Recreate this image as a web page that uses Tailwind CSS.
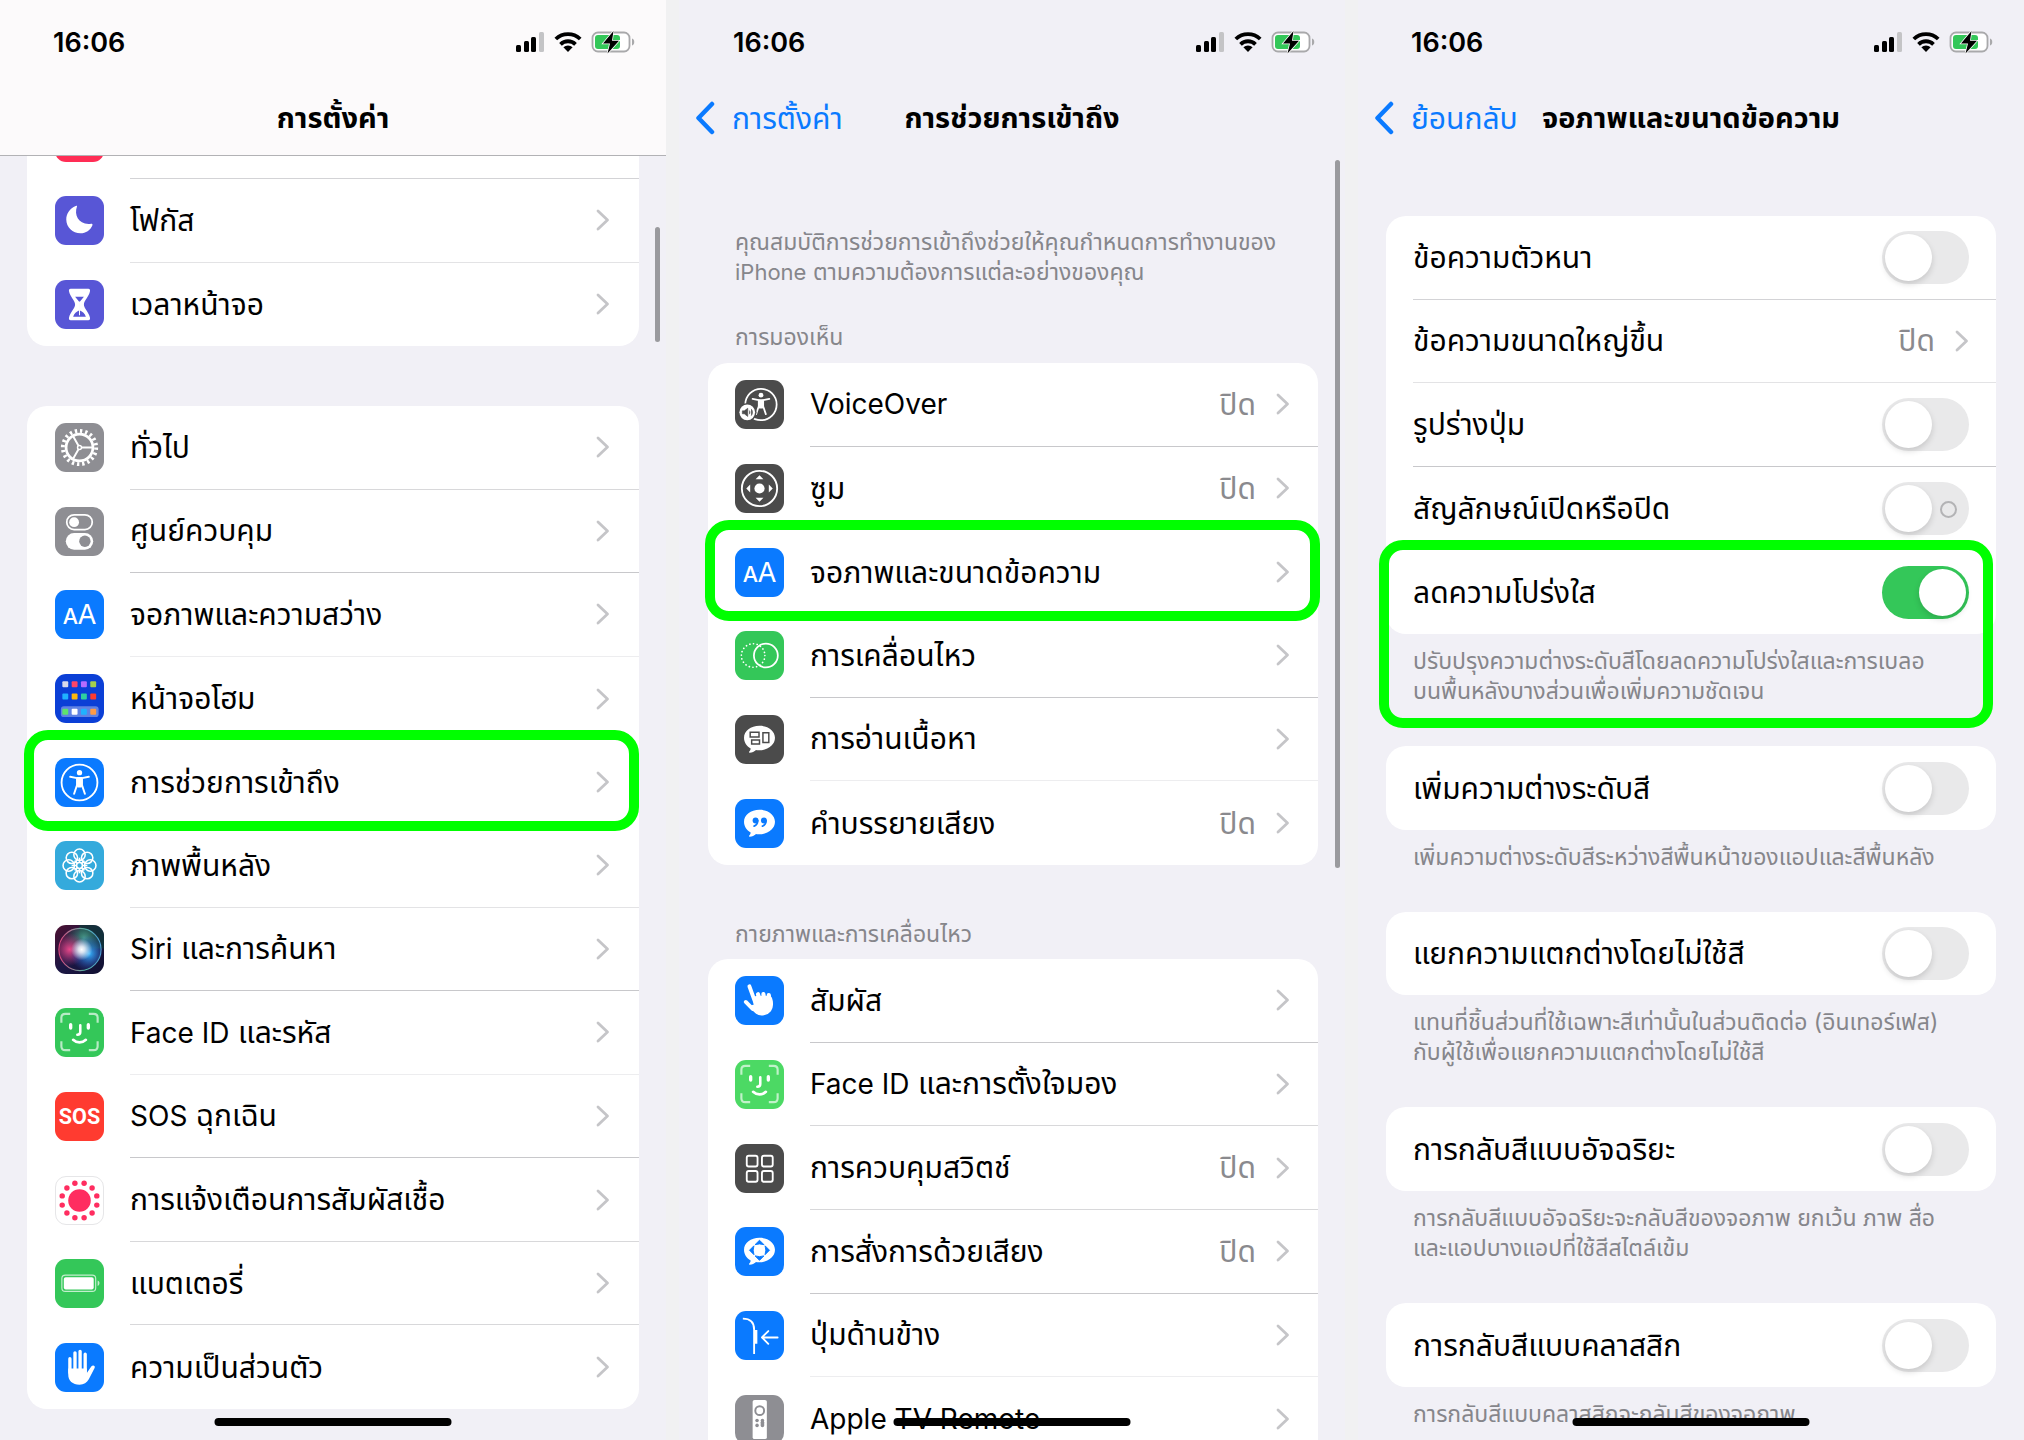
<!DOCTYPE html>
<html lang="th">
<head>
  <meta charset="UTF-8" />
  <meta name="viewport" content="width=device-width, initial-scale=1.0" />
  <title>การตั้งค่า</title>
  <script src="https://cdn.jsdelivr.net/npm/@tailwindcss/browser@4"></script>
</head>
<body class="h-screen overflow-hidden bg-[#f1f1f2] font-['Inter','Noto_Sans_Thai','Noto_Sans',sans-serif] text-black">

  <!-- Shared symbols -->
  <svg class="hidden" xmlns="http://www.w3.org/2000/svg">
    <symbol id="status" viewBox="0 0 120 24">
      <g fill="#000">
        <rect x="1" y="14" width="5" height="7" rx="1.5" />
        <rect x="9" y="10" width="5" height="11" rx="1.5" />
        <rect x="16" y="6" width="5" height="15" rx="1.5" />
        <rect x="24" y="1" width="5" height="20" rx="1.5" fill="#c4c4c6" />
        <path d="M53 21l-4.600-4.700a6.600 6.600 0 0 1 9.200 0z" />
      </g>
      <g fill="none" stroke="#000" stroke-width="3.800">
        <path d="M40.800 8a17.500 17.500 0 0 1 24.400 0" />
        <path d="M45.500 13.300a10.800 10.800 0 0 1 15 0" />
      </g>
      <rect x="77.500" y="1.500" width="37" height="19" rx="5.500" fill="#fff" stroke="#a9a9ab" stroke-width="1.800" />
      <rect x="80" y="4" width="25" height="14" rx="3" fill="#34c759" />
      <path d="M117 7.500c3 .8 3 6.200 0 7z" fill="#a9a9ab" />
      <path d="M98.500 0L88 12.500h7L92.500 22.500 104 9.800h-7z" fill="#000" stroke="#fff" stroke-width="1.500" paint-order="stroke" />
    </symbol>
    <symbol id="chevron" viewBox="0 0 14 22">
      <path d="M2 2l9.500 9L2 20" fill="none" stroke="#c5c5c8" stroke-width="2.800" stroke-linecap="round" stroke-linejoin="round" />
    </symbol>
    <symbol id="back" viewBox="0 0 20 34">
      <path d="M17 3L3.500 17 17 31" fill="none" stroke="#0a7aff" stroke-width="4.500" stroke-linecap="round" stroke-linejoin="round" />
    </symbol>
    <symbol id="person" viewBox="0 0 50 50">
      <circle cx="25" cy="15" r="2.700" fill="#fff" />
      <path d="M15.500 19.200l7 1.300v7l-3 9M34.500 19.200l-7 1.300v7l3 9" fill="none" stroke="#fff" stroke-width="2" stroke-linecap="round" stroke-linejoin="round" />
      <path d="M22 19.500h6v8.500l-1 2h-4l-1-2z" fill="#fff" />
    </symbol>
    <symbol id="face" viewBox="0 0 50 50">
      <g fill="none" stroke="#fff" stroke-linecap="round">
        <path d="M6.500 15v-5c0-2.500 1.500-4 4-4h5M34.500 6h5c2.500 0 4 1.500 4 4v5M43.500 34v5c0 2.500-1.500 4-4 4h-5M15.500 43h-5c-2.500 0-4-1.500-4-4v-5" stroke-width="2.200" opacity=".65" stroke-linecap="butt" />
        <path d="M16 17v3.500M34 17v3.500" stroke-width="3.400" />
        <path d="M25.800 17.500v7c0 2-.8 2.800-3 2.800" stroke-width="2.600" />
        <path d="M18.500 32.500c3.800 3.600 9.200 3.600 13 0" stroke-width="2.800" />
      </g>
    </symbol>
    <symbol id="aa" viewBox="0 0 50 50">
      <text x="8" y="35" fill="#fff" font-size="22" font-weight="500" font-family="Inter, sans-serif">A</text>
      <text x="23" y="35" fill="#fff" font-size="28" font-family="Inter, sans-serif">A</text>
    </symbol>
    <symbol id="bubble" viewBox="0 0 50 50">
      <path d="M25 11c9 0 15.800 5.300 15.800 12.300S34 36 25 36c-1.500 0-2.300-.1-3.500-.3-1.800 1.600-4 2.700-6.500 2.800-.8 0-1-.8-.4-1.300 1-.9 1.300-1.800 1.400-3C11.800 32 9.200 28 9.200 23.300 9.200 16.300 16 11 25 11z" fill="#fff" />
    </symbol>
  </svg>

  <div class="grid h-full grid-cols-3 gap-x-[13px]">

    <!-- Settings -->
    <section class="relative flex flex-col overflow-hidden bg-[#f1f0f6]">
      <header class="h-[156px] shrink-0 border-b border-[#b2b2b5] bg-[#fcfafb]">
        <div class="flex h-[86px] items-center justify-between pr-[31px] pl-[53px]">
          <time class="text-[27px] font-semibold">16:06</time>
          <svg class="h-[24px] w-[120px]"><use href="#status" /></svg>
        </div>
        <h1 class="flex h-[64px] items-center justify-center text-[29px] font-bold">การตั้งค่า</h1>
      </header>

      <main class="px-[27px] whitespace-nowrap">
        <div class="rounded-b-[20px] bg-white">
          <div class="flex h-[23px] items-end overflow-hidden">
            <div class="mb-[17px] ml-[28px] h-[49px] w-[49px] shrink-0 rounded-[11px] bg-[#ff2d55]"></div>
            <div class="ml-[26px] flex-1 border-b border-[#d3d3d6]"></div>
          </div>
          <div class="grid min-h-[167px] auto-rows-fr">
            <a href="#" class="flex items-center pl-[28px]">
              <svg class="h-[49px] w-[49px] rounded-[11px] bg-[#5856d6]" viewBox="0 0 50 50"><path d="M22.500 10.500c-3.500 9.500 2 19.500 14.500 17.800.9-.1 1.600.6 1.200 1.500C36 35 31.500 38 26 38c-8 0-14.500-6-14.500-14 0-6 3.700-11.300 9.600-13.800.9-.4 1.700-.3 1.400.3z" fill="#fff" /></svg>
              <div class="ml-[26px] flex h-full flex-1 items-center justify-between border-b border-[#e3e3e5] pr-[29px] text-[30px]"><span>โฟกัส</span><svg class="h-[22px] w-[14px]"><use href="#chevron" /></svg></div>
            </a>
            <a href="#" class="flex items-center pl-[28px]">
              <svg class="h-[49px] w-[49px] rounded-[11px] bg-[#5856d6]" viewBox="0 0 50 50"><path d="M16 9h18c1.500 0 2 1.200 1.700 2.500-1 5.500-6.200 9.500-6.200 13.500s5.200 8 6.200 13.500c.3 1.300-.2 2.500-1.700 2.500H16c-1.500 0-2-1.200-1.700-2.500 1-5.500 6.200-9.500 6.200-13.500s-5.200-8-6.200-13.500C14 10.200 14.500 9 16 9z" fill="#fff" /><path d="M20.500 17h9l-4 5v9c2.500 1 5 3 6 6.500h-13c1-3.500 3.500-5.500 6-6.500v-9z" fill="#5856d6" /><path d="M25 22v14" stroke="#fff" stroke-width="1" /></svg>
              <div class="ml-[26px] flex h-full flex-1 items-center justify-between pr-[29px] text-[30px]"><span>เวลาหน้าจอ</span><svg class="h-[22px] w-[14px]"><use href="#chevron" /></svg></div>
            </a>
          </div>
        </div>

        <div class="mt-[60px] grid min-h-[1003px] auto-rows-fr rounded-[20px] bg-white">
          <a href="#" class="flex items-center pl-[28px]">
            <svg class="h-[49px] w-[49px] rounded-[11px] bg-[#8e8e93]" viewBox="0 0 50 50" fill="none" stroke="#fff"><circle cx="25" cy="25" r="13.700" stroke-width="2.800" /><circle cx="25" cy="25" r="17" stroke-width="4" stroke-dasharray="2.400 2.940" /><path d="M25 25h13M25 25l-6.500-11.500M25 25l-6.500 11.500" stroke-width="2" /><circle cx="25" cy="25" r="2" fill="#8e8e93" stroke-width="1.500" /></svg>
            <div class="ml-[26px] flex h-full flex-1 items-center justify-between border-b border-[#d8d8da] pr-[29px] text-[30px]"><span>ทั่วไป</span><svg class="h-[22px] w-[14px]"><use href="#chevron" /></svg></div>
          </a>
          <a href="#" class="flex items-center pl-[28px]">
            <svg class="h-[49px] w-[49px] rounded-[11px] bg-[#8e8e93]" viewBox="0 0 50 50"><rect x="12" y="8" width="26" height="15" rx="7.500" fill="none" stroke="#fff" stroke-width="1.800" /><circle cx="19.500" cy="15.500" r="5" fill="#fff" /><rect x="11" y="26.500" width="28" height="17" rx="8.500" fill="#fff" /><circle cx="30.500" cy="35" r="5.800" fill="#8e8e93" /></svg>
            <div class="ml-[26px] flex h-full flex-1 items-center justify-between border-b border-[#c8c8cb] pr-[29px] text-[30px]"><span>ศูนย์ควบคุม</span><svg class="h-[22px] w-[14px]"><use href="#chevron" /></svg></div>
          </a>
          <a href="#" class="flex items-center pl-[28px]">
            <svg class="h-[49px] w-[49px] rounded-[11px] bg-[#0a7aff]"><use href="#aa" /></svg>
            <div class="ml-[26px] flex h-full flex-1 items-center justify-between border-b border-[#ededef] pr-[29px] text-[30px]"><span>จอภาพและความสว่าง</span><svg class="h-[22px] w-[14px]"><use href="#chevron" /></svg></div>
          </a>
          <a href="#" class="flex items-center pl-[28px]">
            <svg class="h-[49px] w-[49px] rounded-[11px] bg-[#0b3fd6]" viewBox="0 0 50 50">
              <rect x="6" y="33" width="38.500" height="11" rx="3" fill="#fff" opacity=".35" />
              <rect x="7.500" y="7.500" width="6" height="6" rx="1" fill="#d9d9ea" /><rect x="17" y="7.500" width="6" height="6" rx="1" fill="#ff4568" /><rect x="26.500" y="7.500" width="6" height="6" rx="1" fill="#b56cff" /><rect x="36" y="7.500" width="6" height="6" rx="1" fill="#a4d04e" />
              <rect x="7.500" y="20" width="6" height="6" rx="1" fill="#1fb2ff" /><rect x="17" y="20" width="6" height="6" rx="1" fill="#ffb90a" /><rect x="26.500" y="20" width="6" height="6" rx="1" fill="#2fcf9f" /><rect x="36" y="20" width="6" height="6" rx="1" fill="#ff3b30" />
              <rect x="7.500" y="35.500" width="6" height="6" rx="1" fill="#5fe36c" /><rect x="17" y="35.500" width="6" height="6" rx="1" fill="#fff" /><rect x="26.500" y="35.500" width="6" height="6" rx="1" fill="#1fb2ff" /><rect x="36" y="35.500" width="6" height="6" rx="1" fill="#ff9a45" />
            </svg>
            <div class="ml-[26px] flex h-full flex-1 items-center justify-between pr-[29px] text-[30px]"><span>หน้าจอโฮม</span><svg class="h-[22px] w-[14px]"><use href="#chevron" /></svg></div>
          </a>
          <a href="#" class="relative flex items-center pl-[28px]">
            <svg class="h-[49px] w-[49px] rounded-[11px] bg-[#0a7aff]" viewBox="0 0 50 50"><circle cx="25" cy="25" r="18.300" fill="none" stroke="#fff" stroke-width="1.900" /><use href="#person" width="50" height="50" /></svg>
            <div class="ml-[26px] flex h-full flex-1 items-center justify-between pr-[29px] text-[30px]"><span>การช่วยการเข้าถึง</span><svg class="h-[22px] w-[14px]"><use href="#chevron" /></svg></div>
            <div class="pointer-events-none absolute -top-[10px] right-0 -bottom-[7px] -left-[3px] rounded-[24px] border-[10px] border-[#00ff00]"></div>
          </a>
          <a href="#" class="flex items-center pl-[28px]">
            <svg class="h-[49px] w-[49px] rounded-[11px] bg-[#34aadc]" viewBox="0 0 50 50" fill="none" stroke="#fff" stroke-width="1.600"><circle cx="25" cy="14" r="5.800" /><circle cx="32.800" cy="17.200" r="5.800" /><circle cx="36" cy="25" r="5.800" /><circle cx="32.800" cy="32.800" r="5.800" /><circle cx="25" cy="36" r="5.800" /><circle cx="17.200" cy="32.800" r="5.800" /><circle cx="14" cy="25" r="5.800" /><circle cx="17.200" cy="17.200" r="5.800" /><circle cx="25" cy="25" r="3" /><path d="M25 22v-5M25 28v5M22 25h-5M28 25h5M23 23l-3-3M27 27l3 3M27 23l3-3M23 27l-3 3" /></svg>
            <div class="ml-[26px] flex h-full flex-1 items-center justify-between border-b border-[#e3e3e5] pr-[29px] text-[30px]"><span>ภาพพื้นหลัง</span><svg class="h-[22px] w-[14px]"><use href="#chevron" /></svg></div>
          </a>
          <a href="#" class="flex items-center pl-[28px]">
            <svg class="h-[49px] w-[49px] rounded-[11px]" viewBox="0 0 50 50">
              <defs>
                <linearGradient id="siri-bg" x1="0" y1="0" x2="1" y2="1"><stop offset="0" stop-color="#4d1030" /><stop offset=".5" stop-color="#1c1745" /><stop offset="1" stop-color="#101030" /></linearGradient>
                <radialGradient id="siri-pink" cx=".25" cy=".5" r=".4"><stop offset="0" stop-color="#e8488a" /><stop offset="1" stop-color="#c03a80" stop-opacity="0" /></radialGradient>
                <radialGradient id="siri-blue" cx=".72" cy=".6" r=".45"><stop offset="0" stop-color="#35b5ff" /><stop offset="1" stop-color="#2a50d0" stop-opacity="0" /></radialGradient>
                <radialGradient id="siri-teal" cx=".6" cy=".22" r=".5"><stop offset="0" stop-color="#4a9a8a" /><stop offset="1" stop-color="#1d5a50" stop-opacity="0" /></radialGradient>
                <radialGradient id="siri-core" cx=".54" cy=".5" r=".26"><stop offset="0" stop-color="#fff" /><stop offset=".3" stop-color="#fff" stop-opacity=".8" /><stop offset="1" stop-color="#fff" stop-opacity="0" /></radialGradient>
                <linearGradient id="siri-ring"><stop offset="0" stop-color="#e0457f" /><stop offset=".6" stop-color="#58b0a0" /><stop offset="1" stop-color="#4a9bd8" /></linearGradient>
              </defs>
              <rect width="50" height="50" fill="url(#siri-bg)" />
              <rect x="25" width="25" height="24" fill="#0e3a38" opacity=".7" />
              <circle cx="25.500" cy="25" r="21" fill="url(#siri-teal)" /><circle cx="25.500" cy="25" r="21" fill="url(#siri-pink)" /><circle cx="25.500" cy="25" r="21" fill="url(#siri-blue)" /><circle cx="25.500" cy="25" r="21" fill="url(#siri-core)" />
              <circle cx="25.500" cy="25" r="21.500" fill="none" stroke="url(#siri-ring)" stroke-width="1.200" />
            </svg>
            <div class="ml-[26px] flex h-full flex-1 items-center justify-between border-b border-[#c8c8cb] pr-[29px] text-[30px]"><span><span class="text-[28px]">Siri</span> และการค้นหา</span><svg class="h-[22px] w-[14px]"><use href="#chevron" /></svg></div>
          </a>
          <a href="#" class="flex items-center pl-[28px]">
            <svg class="h-[49px] w-[49px] rounded-[11px] bg-[#34c759]"><use href="#face" /></svg>
            <div class="ml-[26px] flex h-full flex-1 items-center justify-between border-b border-[#ededef] pr-[29px] text-[30px]"><span><span class="text-[28px]">Face ID</span> และรหัส</span><svg class="h-[22px] w-[14px]"><use href="#chevron" /></svg></div>
          </a>
          <a href="#" class="flex items-center pl-[28px]">
            <svg class="h-[49px] w-[49px] rounded-[11px] bg-[#ff3b30]" viewBox="0 0 50 50"><text x="25" y="33" text-anchor="middle" fill="#fff" font-family="Roboto, sans-serif" font-weight="700" font-size="22">SOS</text></svg>
            <div class="ml-[26px] flex h-full flex-1 items-center justify-between border-b border-[#c8c8cb] pr-[29px] text-[30px]"><span><span class="text-[28px]">SOS</span> ฉุกเฉิน</span><svg class="h-[22px] w-[14px]"><use href="#chevron" /></svg></div>
          </a>
          <a href="#" class="flex items-center pl-[28px]">
            <svg class="h-[49px] w-[49px] rounded-[11px] border border-[#e6e6e8] bg-white" viewBox="0 0 50 50" fill="#ff2d60"><circle cx="25" cy="25" r="12" /><g id="dots"><circle cx="29.900" cy="6.600" r="2.900" /><circle cx="38.400" cy="11.600" r="2.900" /><circle cx="43.400" cy="20.100" r="2.900" /><circle cx="43.400" cy="29.900" r="2.900" /><circle cx="38.400" cy="38.400" r="2.900" /><circle cx="29.900" cy="43.400" r="2.900" /></g><use href="#dots" transform="rotate(180 25 25)" /></svg>
            <div class="ml-[26px] flex h-full flex-1 items-center justify-between border-b border-[#d8d8da] pr-[29px] text-[30px]"><span>การแจ้งเตือนการสัมผัสเชื้อ</span><svg class="h-[22px] w-[14px]"><use href="#chevron" /></svg></div>
          </a>
          <a href="#" class="flex items-center pl-[28px]">
            <svg class="h-[49px] w-[49px] rounded-[11px] bg-[#34c759]" viewBox="0 0 50 50"><rect x="7" y="16.500" width="34.500" height="16.500" rx="3.500" fill="none" stroke="#fff" stroke-width="1.200" opacity=".7" /><rect x="9" y="18.500" width="30.500" height="12.500" rx="2" fill="#fff" /><path d="M43.500 22c2.500.8 2.500 4.700 0 5.500z" fill="#fff" opacity=".7" /></svg>
            <div class="ml-[26px] flex h-full flex-1 items-center justify-between border-b border-[#d8d8da] pr-[29px] text-[30px]"><span>แบตเตอรี่</span><svg class="h-[22px] w-[14px]"><use href="#chevron" /></svg></div>
          </a>
          <a href="#" class="flex items-center pl-[28px]">
            <svg class="h-[49px] w-[49px] rounded-[11px] bg-[#0a7aff]" viewBox="0 0 50 50"><path d="M15.200 16v14M20.400 10v18M25.600 8.500V28M30.800 11.500V30" stroke="#fff" stroke-width="3.400" stroke-linecap="round" /><path d="M13.500 26h19v4.500l4.500-6.500c1.400-2 4.600-1 3.400 1.500L34.500 37c-2 3.500-5 5.500-9.500 5.500-7 0-11.500-3.500-11.500-10.500z" fill="#fff" /></svg>
            <div class="ml-[26px] flex h-full flex-1 items-center justify-between pr-[29px] text-[30px]"><span>ความเป็นส่วนตัว</span><svg class="h-[22px] w-[14px]"><use href="#chevron" /></svg></div>
          </a>
        </div>
      </main>
      <div class="absolute top-[227px] right-[6px] h-[115px] w-[5px] rounded-full bg-[#9a9a9e]"></div>
      <div class="absolute bottom-[14px] left-1/2 h-[8px] w-[237px] -translate-x-1/2 rounded-full bg-black"></div>
    </section>

    <!-- Accessibility -->
    <section class="relative flex flex-col overflow-hidden bg-[#f1f0f6]">
      <header class="h-[156px] shrink-0">
        <div class="flex h-[86px] items-center justify-between pr-[30px] pl-[54px]">
          <time class="text-[27px] font-semibold">16:06</time>
          <svg class="h-[24px] w-[120px]"><use href="#status" /></svg>
        </div>
        <div class="relative flex h-[64px] items-center justify-center">
          <a href="#" class="absolute left-[16px] flex items-center gap-[17px] text-[30px] text-[#0a7aff]"><svg class="h-[34px] w-[20px]"><use href="#back" /></svg>การตั้งค่า</a>
          <h1 class="text-[29px] font-bold">การช่วยการเข้าถึง</h1>
        </div>
      </header>

      <main class="pr-[27px] pl-[29px] whitespace-nowrap">
        <p class="mt-[71px] pl-[27px] text-[23px] leading-[30px] text-[#86868b]">คุณสมบัติการช่วยการเข้าถึงช่วยให้คุณกำหนดการทำงานของ<br /><span class="text-[22px]">iPhone</span> ตามความต้องการแต่ละอย่างของคุณ</p>
        <h2 class="mt-[35px] pl-[27px] text-[23px] leading-[30px] text-[#86868b]">การมองเห็น</h2>
        <div class="mt-[11px] grid min-h-[502px] auto-rows-fr rounded-[20px] bg-white">
          <a href="#" class="flex items-center pl-[27px]">
            <svg class="h-[49px] w-[49px] rounded-[11px] bg-[#4b4b4b]" viewBox="0 0 50 50"><circle cx="26.500" cy="25" r="16" fill="none" stroke="#fff" stroke-width="1.800" /><use href="#person" x="4" y="2" width="45" height="45" /><circle cx="12.500" cy="33" r="9.500" fill="#4b4b4b" /><circle cx="12.500" cy="33" r="8" fill="#fff" /><path d="M7.500 31.500h2l3.500-2.700v8.400l-3.500-2.700h-2zM14.500 31c1 1.200 1 2.800 0 4M16.500 29.500c1.800 2 1.800 5 0 7" fill="#4b4b4b" stroke="#4b4b4b" stroke-width=".6" /></svg>
            <div class="ml-[26px] flex h-full flex-1 items-center border-b border-[#c8c8cb] pr-[28px] text-[30px]"><span class="flex-1 text-[28px]">VoiceOver</span><span class="mr-[20px] text-[#8a8a8e]">ปิด</span><svg class="h-[22px] w-[14px]"><use href="#chevron" /></svg></div>
          </a>
          <a href="#" class="flex items-center pl-[27px]">
            <svg class="h-[49px] w-[49px] rounded-[11px] bg-[#4b4b4b]" viewBox="0 0 50 50" fill="#fff"><circle cx="25" cy="25" r="18" fill="none" stroke="#fff" stroke-width="1.900" /><circle cx="25" cy="25" r="5.200" /><path d="M25 11.500l4 4h-8zM25 38.500l4-4h-8zM11.500 25l4-4v8zM38.500 25l-4-4v8z" /></svg>
            <div class="ml-[26px] flex h-full flex-1 items-center pr-[28px] text-[30px]"><span class="flex-1">ซูม</span><span class="mr-[20px] text-[#8a8a8e]">ปิด</span><svg class="h-[22px] w-[14px]"><use href="#chevron" /></svg></div>
          </a>
          <a href="#" class="relative flex items-center pl-[27px]">
            <svg class="h-[49px] w-[49px] rounded-[11px] bg-[#0a7aff]"><use href="#aa" /></svg>
            <div class="ml-[26px] flex h-full flex-1 items-center pr-[28px] text-[30px]"><span class="flex-1">จอภาพและขนาดข้อความ</span><svg class="h-[22px] w-[14px]"><use href="#chevron" /></svg></div>
            <div class="pointer-events-none absolute -top-[10px] -right-[2px] -bottom-[7px] -left-[3px] rounded-[24px] border-[10px] border-[#00ff00]"></div>
          </a>
          <a href="#" class="flex items-center pl-[27px]">
            <svg class="h-[49px] w-[49px] rounded-[11px] bg-[#34c759]" viewBox="0 0 50 50" fill="none" stroke="#fff"><circle cx="18.500" cy="25" r="12" stroke-width="1.700" stroke-linecap="round" stroke-dasharray="0.100 3.670" /><circle cx="31.500" cy="25" r="12.200" stroke-width="1.800" /></svg>
            <div class="ml-[26px] flex h-full flex-1 items-center border-b border-[#c8c8cb] pr-[28px] text-[30px]"><span class="flex-1">การเคลื่อนไหว</span><svg class="h-[22px] w-[14px]"><use href="#chevron" /></svg></div>
          </a>
          <a href="#" class="flex items-center pl-[27px]">
            <svg class="h-[49px] w-[49px] rounded-[11px] bg-[#4b4b4b]" viewBox="0 0 50 50" fill="none" stroke="#4b4b4b" stroke-width="1.500"><use href="#bubble" width="50" height="50" stroke="none" /><path d="M15.500 17.500h9v5h-9zM17 25.500h8v4h-8zM28.500 18h6v10h-6z" /></svg>
            <div class="ml-[26px] flex h-full flex-1 items-center border-b border-[#ededef] pr-[28px] text-[30px]"><span class="flex-1">การอ่านเนื้อหา</span><svg class="h-[22px] w-[14px]"><use href="#chevron" /></svg></div>
          </a>
          <a href="#" class="flex items-center pl-[27px]">
            <svg class="h-[49px] w-[49px] rounded-[11px] bg-[#0a7aff]" viewBox="0 0 50 50"><use href="#bubble" width="50" height="50" /><g fill="#0a7aff"><circle cx="21" cy="22" r="3" /><circle cx="29.500" cy="22" r="3" /></g><path d="M23.200 22c0 3-1 4.700-3.700 5.700M31.700 22c0 3-1 4.700-3.700 5.700" fill="none" stroke="#0a7aff" stroke-width="1.700" stroke-linecap="round" /></svg>
            <div class="ml-[26px] flex h-full flex-1 items-center pr-[28px] text-[30px]"><span class="flex-1">คำบรรยายเสียง</span><span class="mr-[20px] text-[#8a8a8e]">ปิด</span><svg class="h-[22px] w-[14px]"><use href="#chevron" /></svg></div>
          </a>
        </div>

        <h2 class="mt-[54px] pl-[27px] text-[23px] leading-[30px] text-[#86868b]">กายภาพและการเคลื่อนไหว</h2>
        <div class="mt-[10px] grid min-h-[502px] auto-rows-fr rounded-t-[20px] bg-white">
          <a href="#" class="flex items-center pl-[27px]">
            <svg class="h-[49px] w-[49px] rounded-[11px] bg-[#0a7aff]" viewBox="0 0 50 50" stroke="#fff" stroke-linecap="round"><path d="M14.700 10.500L21 28" stroke-width="4" /><path d="M23.500 18.500l2 8M29 18.500l1 8M34.500 19.500l.8 6" stroke-width="4.200" /><path d="M11 26.500l7 7" stroke-width="4" /><path d="M19 22l3-1h11l4 1.500c1.700 5 1.700 9-1 13-3 4-10 5.500-14 2.500l-7-6.500 5-2z" fill="#fff" stroke-width="1.500" stroke-linejoin="round" /></svg>
            <div class="ml-[26px] flex h-full flex-1 items-center border-b border-[#c8c8cb] pr-[28px] text-[30px]"><span class="flex-1">สัมผัส</span><svg class="h-[22px] w-[14px]"><use href="#chevron" /></svg></div>
          </a>
          <a href="#" class="flex items-center pl-[27px]">
            <svg class="h-[49px] w-[49px] rounded-[11px] bg-[#4cd964]"><use href="#face" /></svg>
            <div class="ml-[26px] flex h-full flex-1 items-center border-b border-[#d8d8da] pr-[28px] text-[30px]"><span class="flex-1"><span class="text-[28px]">Face ID</span> และการตั้งใจมอง</span><svg class="h-[22px] w-[14px]"><use href="#chevron" /></svg></div>
          </a>
          <a href="#" class="flex items-center pl-[27px]">
            <svg class="h-[49px] w-[49px] rounded-[11px] bg-[#4b4b4b]" viewBox="0 0 50 50" fill="none" stroke="#fff" stroke-width="1.900"><rect x="12" y="12" width="11" height="11" rx="2" /><rect x="27.500" y="12" width="11" height="11" rx="2" /><rect x="12" y="27.500" width="11" height="11" rx="2" /><rect x="27.500" y="27.500" width="11" height="11" rx="2" /></svg>
            <div class="ml-[26px] flex h-full flex-1 items-center border-b border-[#d8d8da] pr-[28px] text-[30px]"><span class="flex-1">การควบคุมสวิตช์</span><span class="mr-[20px] text-[#8a8a8e]">ปิด</span><svg class="h-[22px] w-[14px]"><use href="#chevron" /></svg></div>
          </a>
          <a href="#" class="flex items-center pl-[27px]">
            <svg class="h-[49px] w-[49px] rounded-[11px] bg-[#0a7aff]" viewBox="0 0 50 50"><use href="#bubble" width="50" height="50" /><path d="M25 13.500l4.500 4.500q-4.500-1.500-9 0zM25 34l4.500-4.500q-4.500 1.500-9 0zM14.800 23.700l4.500-4.500q-1.500 4.500 0 9zM35.200 23.700l-4.500-4.500q1.500 4.500 0 9z" fill="#0a7aff" stroke="#0a7aff" stroke-width="1" stroke-linejoin="round" /></svg>
            <div class="ml-[26px] flex h-full flex-1 items-center border-b border-[#c8c8cb] pr-[28px] text-[30px]"><span class="flex-1">การสั่งการด้วยเสียง</span><span class="mr-[20px] text-[#8a8a8e]">ปิด</span><svg class="h-[22px] w-[14px]"><use href="#chevron" /></svg></div>
          </a>
          <a href="#" class="flex items-center pl-[27px]">
            <svg class="h-[49px] w-[49px] rounded-[11px] bg-[#0a7aff]" viewBox="0 0 50 50" fill="none" stroke="#fff" stroke-width="1.900"><path d="M8 7.800c7.500 0 11.500 3.500 11.500 11v25" /><path d="M21.500 19.500v14" stroke-width="2.600" /><path d="M43.500 27H27.500M34 20.500L27.500 27l6.500 6.500" stroke-linecap="round" stroke-linejoin="round" /></svg>
            <div class="ml-[26px] flex h-full flex-1 items-center border-b border-[#ededef] pr-[28px] text-[30px]"><span class="flex-1">ปุ่มด้านข้าง</span><svg class="h-[22px] w-[14px]"><use href="#chevron" /></svg></div>
          </a>
          <a href="#" class="flex items-center pl-[27px]">
            <svg class="h-[49px] w-[49px] rounded-[11px] bg-[#8e8e93]" viewBox="0 0 50 50"><rect x="18" y="5" width="14.500" height="40" rx="2" fill="#fff" /><circle cx="25.200" cy="16" r="4.500" fill="none" stroke="#8e8e93" stroke-width="2" /><g fill="#8e8e93"><circle cx="22.500" cy="26" r="1.800" /><circle cx="28" cy="26" r="1.800" /><circle cx="22.500" cy="31" r="1.800" /><rect x="26.200" y="26" width="3.600" height="7" rx="1.800" /></g></svg>
            <div class="ml-[26px] flex h-full flex-1 items-center pr-[28px] text-[28px]"><span class="flex-1">Apple TV Remote</span><svg class="h-[22px] w-[14px]"><use href="#chevron" /></svg></div>
          </a>
        </div>
      </main>
      <div class="absolute top-[160px] right-[5px] h-[708px] w-[5px] rounded-full bg-[#9a9a9e]"></div>
      <div class="absolute bottom-[14px] left-1/2 h-[8px] w-[237px] -translate-x-1/2 rounded-full bg-black"></div>
    </section>

    <!-- Display & text size -->
    <section class="relative flex flex-col overflow-hidden bg-[#f1f0f6]">
      <header class="h-[156px] shrink-0">
        <div class="flex h-[86px] items-center justify-between pr-[31px] pl-[53px]">
          <time class="text-[27px] font-semibold">16:06</time>
          <svg class="h-[24px] w-[120px]"><use href="#status" /></svg>
        </div>
        <div class="relative flex h-[64px] items-center justify-center">
          <a href="#" class="absolute left-[16px] flex items-center gap-[17px] text-[30px] text-[#0a7aff]"><svg class="h-[34px] w-[20px]"><use href="#back" /></svg>ย้อนกลับ</a>
          <h1 class="text-[29px] font-bold">จอภาพและขนาดข้อความ</h1>
        </div>
      </header>

      <main class="px-[28px] whitespace-nowrap">
        <div class="mt-[60px] grid min-h-[418px] auto-rows-fr rounded-[20px] bg-white">
          <label class="flex pl-[27px]">
            <span class="flex flex-1 items-center justify-between border-b border-[#d3d3d6] pr-[27px] text-[30px]">ข้อความตัวหนา
              <input type="checkbox" class="relative h-[53px] w-[87px] appearance-none rounded-full bg-[#e9e9ea] before:absolute before:top-[3px] before:left-[3px] before:h-[47px] before:w-[47px] before:rounded-full before:bg-white before:shadow-[0_3px_6px_rgba(0,0,0,0.15)] checked:bg-[#34c759] checked:before:left-[37px]" />
            </span>
          </label>
          <a href="#" class="flex pl-[27px]">
            <span class="flex flex-1 items-center border-b border-[#e3e3e5] pr-[27px] text-[30px]"><span class="flex-1">ข้อความขนาดใหญ่ขึ้น</span><span class="mr-[20px] text-[#8a8a8e]">ปิด</span><svg class="h-[22px] w-[14px]"><use href="#chevron" /></svg></span>
          </a>
          <label class="flex pl-[27px]">
            <span class="flex flex-1 items-center justify-between border-b border-[#c8c8cb] pr-[27px] text-[30px]">รูปร่างปุ่ม
              <input type="checkbox" class="relative h-[53px] w-[87px] appearance-none rounded-full bg-[#e9e9ea] before:absolute before:top-[3px] before:left-[3px] before:h-[47px] before:w-[47px] before:rounded-full before:bg-white before:shadow-[0_3px_6px_rgba(0,0,0,0.15)] checked:bg-[#34c759] checked:before:left-[37px]" />
            </span>
          </label>
          <label class="flex pl-[27px]">
            <span class="flex flex-1 items-center justify-between pr-[27px] text-[30px]">สัญลักษณ์เปิดหรือปิด
              <input type="checkbox" class="relative h-[53px] w-[87px] appearance-none rounded-full bg-[#e9e9ea] before:absolute before:top-[3px] before:left-[3px] before:h-[47px] before:w-[47px] before:rounded-full before:bg-white before:shadow-[0_3px_6px_rgba(0,0,0,0.15)] after:absolute after:top-[19px] after:right-[12px] after:h-[17px] after:w-[17px] after:rounded-full after:border-2 after:border-[#b3b3b5] checked:bg-[#34c759] checked:before:left-[37px]" />
            </span>
          </label>
          <label class="relative flex pl-[27px]">
            <span class="flex flex-1 items-center justify-between pr-[27px] text-[30px]">ลดความโปร่งใส
              <input type="checkbox" checked class="relative h-[53px] w-[87px] appearance-none rounded-full bg-[#e9e9ea] before:absolute before:top-[3px] before:left-[3px] before:h-[47px] before:w-[47px] before:rounded-full before:bg-white before:shadow-[0_3px_6px_rgba(0,0,0,0.15)] checked:bg-[#34c759] checked:before:left-[37px]" />
            </span>
            <span class="pointer-events-none absolute -top-[10px] right-[3px] -left-[7px] h-[188px] rounded-[24px] border-[10px] border-[#00ff00]"></span>
          </label>
        </div>
        <p class="mt-[12px] pl-[27px] text-[23px] leading-[30px] text-[#86868b]">ปรับปรุงความต่างระดับสีโดยลดความโปร่งใสและการเบลอ<br />บนพื้นหลังบางส่วนเพื่อเพิ่มความชัดเจน</p>

        <label class="mt-[40px] flex h-[84px] items-center justify-between rounded-[20px] bg-white px-[27px] text-[30px]">เพิ่มความต่างระดับสี
          <input type="checkbox" class="relative h-[53px] w-[87px] appearance-none rounded-full bg-[#e9e9ea] before:absolute before:top-[3px] before:left-[3px] before:h-[47px] before:w-[47px] before:rounded-full before:bg-white before:shadow-[0_3px_6px_rgba(0,0,0,0.15)] checked:bg-[#34c759] checked:before:left-[37px]" />
        </label>
        <p class="mt-[12px] pl-[27px] text-[23px] leading-[30px] text-[#86868b]">เพิ่มความต่างระดับสีระหว่างสีพื้นหน้าของแอปและสีพื้นหลัง</p>

        <label class="mt-[40px] flex h-[83px] items-center justify-between rounded-[20px] bg-white px-[27px] text-[30px]">แยกความแตกต่างโดยไม่ใช้สี
          <input type="checkbox" class="relative h-[53px] w-[87px] appearance-none rounded-full bg-[#e9e9ea] before:absolute before:top-[3px] before:left-[3px] before:h-[47px] before:w-[47px] before:rounded-full before:bg-white before:shadow-[0_3px_6px_rgba(0,0,0,0.15)] checked:bg-[#34c759] checked:before:left-[37px]" />
        </label>
        <p class="mt-[12px] pl-[27px] text-[23px] leading-[30px] text-[#86868b]">แทนที่ชิ้นส่วนที่ใช้เฉพาะสีเท่านั้นในส่วนติดต่อ (อินเทอร์เฟส)<br />กับผู้ใช้เพื่อแยกความแตกต่างโดยไม่ใช้สี</p>

        <label class="mt-[40px] flex h-[84px] items-center justify-between rounded-[20px] bg-white px-[27px] text-[30px]">การกลับสีแบบอัจฉริยะ
          <input type="checkbox" class="relative h-[53px] w-[87px] appearance-none rounded-full bg-[#e9e9ea] before:absolute before:top-[3px] before:left-[3px] before:h-[47px] before:w-[47px] before:rounded-full before:bg-white before:shadow-[0_3px_6px_rgba(0,0,0,0.15)] checked:bg-[#34c759] checked:before:left-[37px]" />
        </label>
        <p class="mt-[12px] pl-[27px] text-[23px] leading-[30px] text-[#86868b]">การกลับสีแบบอัจฉริยะจะกลับสีของจอภาพ ยกเว้น ภาพ สื่อ<br />และแอปบางแอปที่ใช้สีสไตล์เข้ม</p>

        <label class="mt-[40px] flex h-[84px] items-center justify-between rounded-[20px] bg-white px-[27px] text-[30px]">การกลับสีแบบคลาสสิก
          <input type="checkbox" class="relative h-[53px] w-[87px] appearance-none rounded-full bg-[#e9e9ea] before:absolute before:top-[3px] before:left-[3px] before:h-[47px] before:w-[47px] before:rounded-full before:bg-white before:shadow-[0_3px_6px_rgba(0,0,0,0.15)] checked:bg-[#34c759] checked:before:left-[37px]" />
        </label>
        <p class="mt-[12px] pl-[27px] text-[23px] leading-[30px] text-[#86868b]">การกลับสีแบบคลาสสิกจะกลับสีของจอภาพ</p>
      </main>
      <div class="absolute bottom-[14px] left-1/2 h-[8px] w-[237px] -translate-x-1/2 rounded-full bg-black"></div>
    </section>
  </div>
</body>
</html>
